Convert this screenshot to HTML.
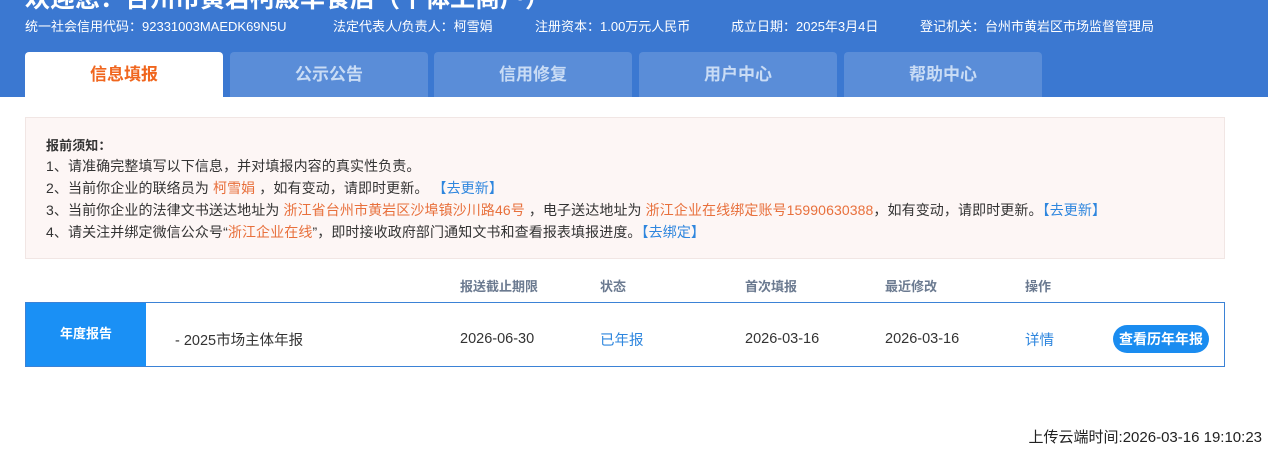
<!DOCTYPE html>
<html><head><meta charset="utf-8"><style>
*{margin:0;padding:0;box-sizing:border-box}
body{width:1268px;height:449px;overflow:hidden;background:#fff;font-family:"Liberation Sans","Noto Sans CJK SC",sans-serif;font-size:13px;color:#333;position:relative}
.hd{position:absolute;left:0;top:0;width:1268px;height:97px;background:#3b78d1}
.ab{position:absolute;white-space:nowrap}
.title{left:25px;top:-21px;font-size:25px;font-weight:bold;color:#fff}
.info{top:16px;color:#fff;font-size:13px}
.tab{position:absolute;top:52px;width:198px;height:45px;background:#5a8dd8;border-radius:4px 4px 0 0;color:#c9dcf5;font-weight:bold;font-size:17px;text-align:center;line-height:46px}
.tab.on{background:#fff;color:#f0661e}
.notice{position:absolute;left:25px;top:117px;width:1200px;height:142px;background:#fdf6f5;border:1px solid #f1e6e4}
.n{left:46px;font-size:14px;color:#333;letter-spacing:0.1px}
.o{color:#e8703c}.b{color:#2e86de}
.th{top:276px;color:#6b7a90;font-weight:bold;font-size:13px}
.row{position:absolute;left:25px;top:302px;width:1200px;height:65px;border:1px solid #3b82d6}
.lc{position:absolute;left:0;top:0;width:120px;height:63px;background:#1a90f5;color:#fff;font-weight:bold;text-align:center;line-height:62px;font-size:13px}
.td{top:329px;font-size:14.5px;color:#333}
.dt{top:331px}
.btn{position:absolute;left:1113px;top:325px;width:96px;height:28px;border-radius:14px;background:#1a8cf0;color:#fff;font-weight:bold;font-size:14px;text-align:center;line-height:28px}
</style></head><body>
<div class="hd"></div>
<div class="ab title">欢迎您：台州市黄岩柯殿华食店（个体工商户）</div>
<div class="ab info" style="left:25px">统一社会信用代码：92331003MAEDK69N5U</div>
<div class="ab info" style="left:333px">法定代表人/负责人：柯雪娟</div>
<div class="ab info" style="left:535px">注册资本：1.00万元人民币</div>
<div class="ab info" style="left:731px">成立日期：2025年3月4日</div>
<div class="ab info" style="left:920px">登记机关：台州市黄岩区市场监督管理局</div>
<div class="tab on" style="left:25px">信息填报</div>
<div class="tab" style="left:230px">公示公告</div>
<div class="tab" style="left:434px">信用修复</div>
<div class="tab" style="left:639px">用户中心</div>
<div class="tab" style="left:844px">帮助中心</div>
<div class="notice"></div>
<div class="ab n" style="top:135px;font-weight:bold;font-size:13px">报前须知：</div>
<div class="ab n" style="top:156px">1、请准确完整填写以下信息，并对填报内容的真实性负责。</div>
<div class="ab n" style="top:178px">2、当前你企业的联络员为 <span class="o">柯雪娟</span> ，如有变动，请即时更新。 <span class="b">【去更新】</span></div>
<div class="ab n" style="top:200px">3、当前你企业的法律文书送达地址为 <span class="o">浙江省台州市黄岩区沙埠镇沙川路46号</span> ，电子送达地址为 <span class="o">浙江企业在线绑定账号15990630388</span>，如有变动，请即时更新。<span class="b">【去更新】</span></div>
<div class="ab n" style="top:222px">4、请关注并绑定微信公众号“<span class="o">浙江企业在线</span>”，即时接收政府部门通知文书和查看报表填报进度。<span class="b">【去绑定】</span></div>
<div class="ab th" style="left:460px">报送截止期限</div>
<div class="ab th" style="left:600px">状态</div>
<div class="ab th" style="left:745px">首次填报</div>
<div class="ab th" style="left:885px">最近修改</div>
<div class="ab th" style="left:1025px">操作</div>
<div class="row"><div class="lc">年度报告</div></div>
<div class="ab td" style="left:175px">- 2025市场主体年报</div>
<div class="ab td dt" style="left:460px">2026-06-30</div>
<div class="ab td" style="left:600px;color:#2e86de">已年报</div>
<div class="ab td dt" style="left:745px">2026-03-16</div>
<div class="ab td dt" style="left:885px">2026-03-16</div>
<div class="ab td" style="left:1025px;color:#2e86de">详情</div>
<div class="btn">查看历年年报</div>
<div class="ab" style="right:6px;top:426px;font-size:15px;color:#222">上传云端时间:2026-03-16 19:10:23</div>
</body></html>
